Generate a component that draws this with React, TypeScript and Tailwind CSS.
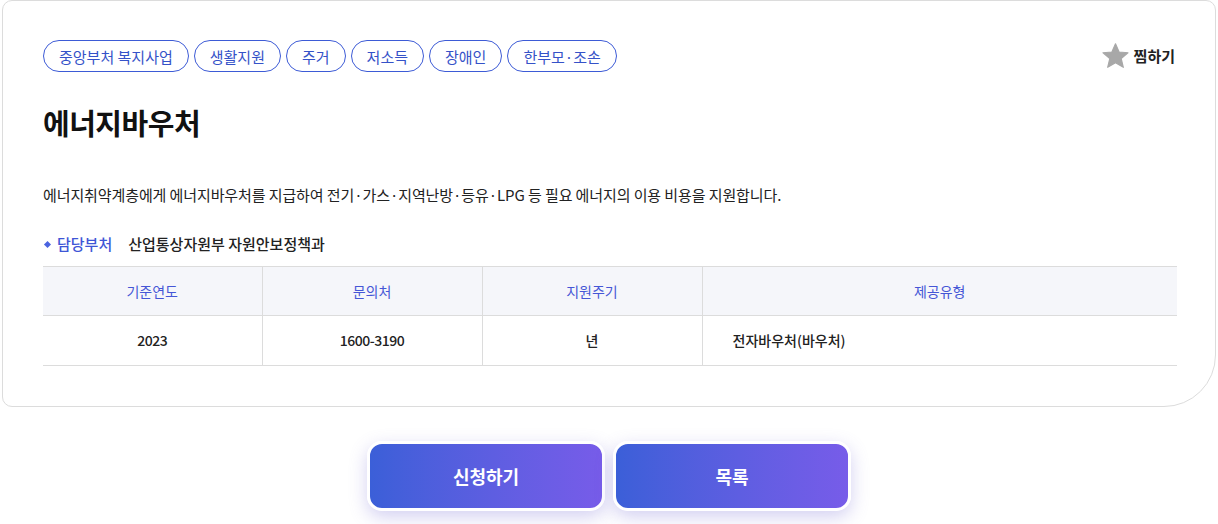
import React from "react";

const tags = ["중앙부처 복지사업", "생활지원", "주거", "저소득", "장애인", "한부모·조손"];

export default function App() {
  return (
    <div
      className="w-[1218px] h-[524px] bg-white overflow-hidden"
      style={{ fontFamily: '"Noto Sans CJK KR", "Noto Sans", sans-serif' }}
    >
      <div className="mx-[2px] border border-[#dcdcdc] rounded-t-[10px] rounded-bl-[10px] rounded-br-[52px] pl-[40px] pr-[38px] pt-[39px] pb-[40px]">
        <div className="flex items-center justify-between">
          <div className="flex gap-[5px]">
            {tags.map((t) => (
              <span
                key={t}
                className="h-[32px] px-[15px] flex items-center rounded-full border border-[#3d5bd6] text-[#3552c8] text-[15px] leading-none"
              >
                {t}
              </span>
            ))}
          </div>
          <div className="flex items-center gap-[4px] mr-[2px]">
            <svg width="29" height="28" viewBox="0 0 24 24">
              <path
                d="M12 1.5l3.1 7.1 7.6.6-5.8 5 1.8 7.5L12 17.7 5.3 21.7l1.8-7.5-5.8-5 7.6-.6z"
                fill="#a8a8a8"
                stroke="#a8a8a8"
                strokeWidth="1"
                strokeLinejoin="round"
              />
            </svg>
            <span className="text-[15px] font-bold text-[#222]">찜하기</span>
          </div>
        </div>
        <h1 className="mt-[30px] text-[29px] leading-[40px] font-bold text-[#111] tracking-[-0.5px]">에너지바우처</h1>
        <p className="mt-[41px] text-[15px] leading-[24px] text-[#222] tracking-[-0.1px]">
          에너지취약계층에게 에너지바우처를 지급하여 전기·가스·지역난방·등유·LPG 등 필요 에너지의 이용 비용을 지원합니다.
        </p>
        <div className="mt-[25px] flex items-center text-[15px] leading-[24px]">
          <span className="w-[5px] h-[5px] bg-[#4a63e0] rotate-45 ml-[2px] mr-[7px]" />
          <span className="text-[#3e56d6] font-medium">담당부처</span>
          <span className="ml-[16px] text-[#222] font-medium">산업통상자원부 자원안보정책과</span>
        </div>
        <table className="mt-[10px] w-full border-collapse text-[14px]">
          <thead>
            <tr className="bg-[#f5f6fa] h-[49px] border-t border-b border-[#dcdcdc]">
              <th className="w-[219px] font-normal text-[#4556d6] border-r border-[#dcdcdc]">기준연도</th>
              <th className="w-[220px] font-normal text-[#4556d6] border-r border-[#dcdcdc]">문의처</th>
              <th className="w-[220px] font-normal text-[#4556d6] border-r border-[#dcdcdc]">지원주기</th>
              <th className="font-normal text-[#4556d6]">제공유형</th>
            </tr>
          </thead>
          <tbody>
            <tr className="h-[50px] border-b border-[#dcdcdc] text-[#222] font-medium">
              <td className="text-center border-r border-[#dcdcdc] tracking-[-0.5px]">2023</td>
              <td className="text-center border-r border-[#dcdcdc] tracking-[-0.5px]">1600-3190</td>
              <td className="text-center border-r border-[#dcdcdc]">년</td>
              <td className="pl-[30px]">전자바우처(바우처)</td>
            </tr>
          </tbody>
        </table>
      </div>
      <div className="mt-[34px] flex justify-center gap-[8px]">
        {["신청하기", "목록"].map((b) => (
          <button
            key={b}
            className="w-[238px] h-[70px] rounded-[15px] border-[3px] border-white bg-gradient-to-r from-[#3b5fd8] to-[#775ce9] text-white text-[18px] font-bold shadow-[0_6px_18px_rgba(110,100,210,0.3)]"
          >
            {b}
          </button>
        ))}
      </div>
    </div>
  );
}
